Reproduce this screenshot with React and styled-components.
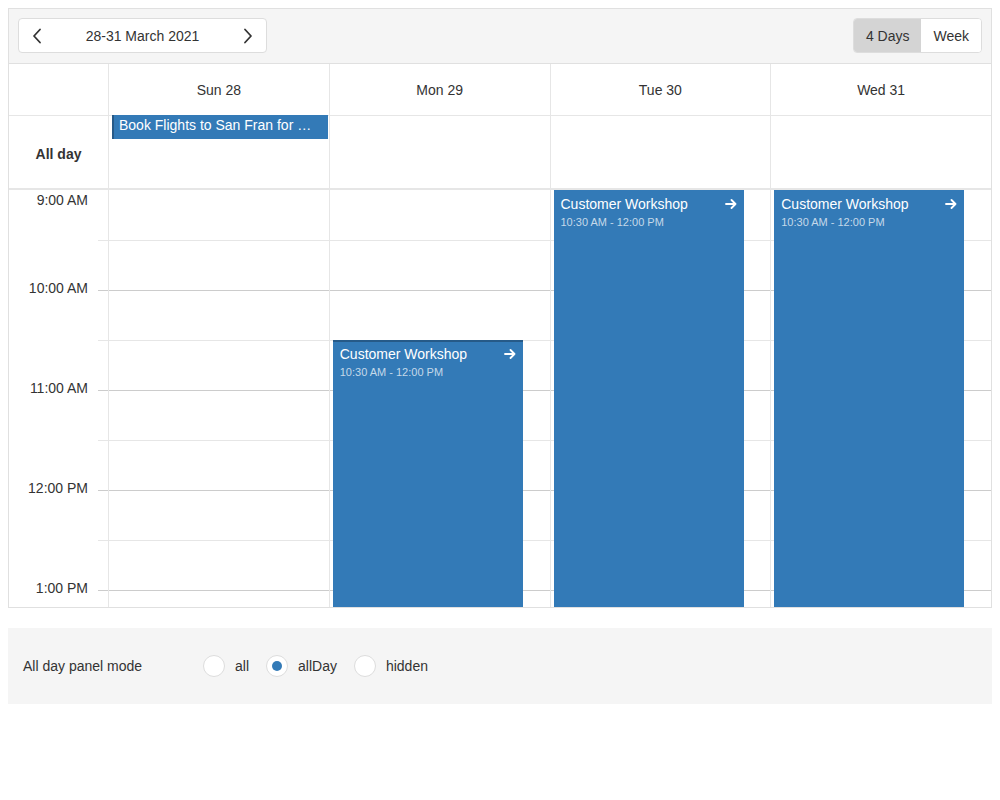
import styled, { createGlobalStyle } from "styled-components";

const GlobalStyle = createGlobalStyle`
    body {
        margin: 0;
        background: #fff;
        font-family: "Liberation Sans", Arial, sans-serif;
        color: #333;
    }
`;

const Page = styled.div`
    padding: 8px;
    width: 984px;
`;

const Scheduler = styled.div`
    border: 1px solid #e0e0e0;
    height: 598px;
    display: flex;
    flex-direction: column;
    overflow: hidden;
`;

const Toolbar = styled.div`
    height: 55px;
    flex-shrink: 0;
    box-sizing: border-box;
    padding: 9px;
    background: #f5f5f5;
    border-bottom: 1px solid #e0e0e0;
    display: flex;
    align-items: flex-start;
    justify-content: space-between;
`;

const Navigator = styled.div`
    width: 249px;
    height: 35px;
    box-sizing: border-box;
    border: 1px solid #ddd;
    border-radius: 4px;
    background: #fff;
    display: flex;
    align-items: center;
`;

const NavButton = styled.div`
    width: 36px;
    height: 100%;
    display: flex;
    align-items: center;
    justify-content: center;
`;

const Caption = styled.div`
    flex: 1;
    text-align: center;
    font-size: 14px;
`;

const Switcher = styled.div`
    height: 35px;
    box-sizing: border-box;
    border: 1px solid #ddd;
    border-radius: 4px;
    background: #fff;
    display: flex;
    overflow: hidden;
`;

const ViewButton = styled.div`
    padding: 0 12px;
    display: flex;
    align-items: center;
    font-size: 14px;
    background: ${(p) => (p.$active ? "#d4d4d4" : "#fff")};
`;

const Row = styled.div`
    display: grid;
    grid-template-columns: 99px repeat(4, minmax(0, 1fr));
    flex-shrink: 0;
`;

const HeaderRow = styled(Row)`
    height: 52px;
    box-sizing: border-box;
    border-bottom: 1px solid #e6e6e6;
`;

const DayName = styled.div`
    border-left: 1px solid #e6e6e6;
    display: flex;
    align-items: center;
    justify-content: center;
    font-size: 14px;
`;

const AllDayRow = styled(Row)`
    height: 74px;
    box-sizing: border-box;
    border-bottom: 2px solid #e6e6e6;
`;

const AllDayLabel = styled.div`
    display: flex;
    align-items: center;
    justify-content: center;
    font-size: 14px;
    font-weight: bold;
    padding-top: 3px;
`;

const AllDayCell = styled.div`
    border-left: 1px solid #e6e6e6;
    padding: 0 1px 0 3px;
    min-width: 0;
`;

const AllDayEvent = styled.div`
    margin-top: -1px;
    height: 24px;
    box-sizing: border-box;
    background: #337ab7;
    border-left: 2px solid #265a88;
    color: #fff;
    font-size: 14px;
    line-height: 16px;
    padding: 2px 5px 0;
    white-space: nowrap;
`;

const Body = styled(Row)`
    flex: 1;
    overflow: hidden;
`;

const TimeColumn = styled.div`
    display: flex;
    flex-direction: column;
`;

const lineColor = (i) => (i === 0 ? "transparent" : i % 2 === 0 ? "#cccccc" : "#e6e6e6");

const TimeCell = styled.div`
    height: 50px;
    flex-shrink: 0;
    box-sizing: border-box;
    padding-right: 20px;
    text-align: right;
    background: linear-gradient(${(p) => lineColor(p.$index)}, ${(p) => lineColor(p.$index)}) right top / 10px 1px no-repeat;
`;

const TimeLabel = styled.div`
    font-size: 14px;
    line-height: 16px;
    margin-top: ${(p) => (p.$first ? "2px" : "-10px")};
`;

const DayColumn = styled.div`
    position: relative;
    border-left: 1px solid #e6e6e6;
    display: flex;
    flex-direction: column;
`;

const GridCell = styled.div`
    height: 50px;
    flex-shrink: 0;
    box-sizing: border-box;
    border-top: 1px solid ${(p) => lineColor(p.$index)};
`;

const Appointment = styled.div`
    position: absolute;
    left: 3px;
    width: 190px;
    bottom: 0;
    box-sizing: border-box;
    background: #337ab7;
    border-top: 2px solid ${(p) => (p.$marked ? "#265a88" : "#337ab7")};
    padding: 4px 7px 0;
    color: #fff;
`;

const ApptHead = styled.div`
    display: flex;
    align-items: center;
    justify-content: space-between;
`;

const ApptTitle = styled.div`
    font-size: 14px;
    line-height: 16px;
`;

const ApptTime = styled.div`
    margin-top: 3px;
    font-size: 11px;
    line-height: 14px;
    color: rgba(255, 255, 255, 0.72);
`;

const Options = styled.div`
    margin-top: 20px;
    height: 76px;
    background: #f5f5f5;
    padding-left: 15px;
    display: flex;
    align-items: center;
    font-size: 14px;
`;

const OptionLabel = styled.div`
    width: 180px;
`;

const RadioGroup = styled.div`
    display: flex;
    align-items: center;
    gap: 17px;
`;

const RadioItem = styled.div`
    display: flex;
    align-items: center;
    gap: 10px;
`;

const RadioCircle = styled.div`
    width: 22px;
    height: 22px;
    box-sizing: border-box;
    border-radius: 50%;
    border: 1px solid #ddd;
    background: #fff;
    display: flex;
    align-items: center;
    justify-content: center;
    &::after {
        content: "";
        width: 10px;
        height: 10px;
        border-radius: 50%;
        background: ${(p) => (p.$checked ? "#337ab7" : "transparent")};
    }
`;

const Chevron = ({ dir }) => (
    <svg width="10" height="16" viewBox="0 0 10 16" fill="none">
        <path
            d={dir === "left" ? "M8 1.5 L2 8 L8 14.5" : "M2 1.5 L8 8 L2 14.5"}
            stroke="#333"
            strokeWidth="1.8"
            strokeLinecap="round"
            strokeLinejoin="round"
        />
    </svg>
);

const Arrow = () => (
    <svg width="12" height="10" viewBox="0 0 12 10" fill="none">
        <path
            d="M1 5 H10.5 M6.5 1 L10.5 5 L6.5 9"
            stroke="#fff"
            strokeWidth="1.8"
            strokeLinecap="round"
            strokeLinejoin="round"
        />
    </svg>
);

const days = ["Sun 28", "Mon 29", "Tue 30", "Wed 31"];
const hours = ["9:00 AM", "10:00 AM", "11:00 AM", "12:00 PM", "1:00 PM"];
const rows = Array.from({ length: 9 }, (_, i) => i);

// offset in minutes from 9:00 AM
const appointments = [
    { day: 1, start: 90, marked: true },
    { day: 2, start: 0 },
    { day: 3, start: 0 },
];

function App() {
    return (
        <Page>
            <GlobalStyle />
            <Scheduler>
                <Toolbar>
                    <Navigator>
                        <NavButton>
                            <Chevron dir="left" />
                        </NavButton>
                        <Caption>28-31 March 2021</Caption>
                        <NavButton>
                            <Chevron dir="right" />
                        </NavButton>
                    </Navigator>
                    <Switcher>
                        <ViewButton $active>4 Days</ViewButton>
                        <ViewButton>Week</ViewButton>
                    </Switcher>
                </Toolbar>
                <HeaderRow>
                    <div />
                    {days.map((d) => (
                        <DayName key={d}>{d}</DayName>
                    ))}
                </HeaderRow>
                <AllDayRow>
                    <AllDayLabel>All day</AllDayLabel>
                    {days.map((d, i) => (
                        <AllDayCell key={d}>
                            {i === 0 && <AllDayEvent>Book Flights to San Fran for …</AllDayEvent>}
                        </AllDayCell>
                    ))}
                </AllDayRow>
                <Body>
                    <TimeColumn>
                        {rows.map((i) => (
                            <TimeCell key={i} $index={i}>
                                {i % 2 === 0 && hours[i / 2] && (
                                    <TimeLabel $first={i === 0}>{hours[i / 2]}</TimeLabel>
                                )}
                            </TimeCell>
                        ))}
                    </TimeColumn>
                    {days.map((d, di) => (
                        <DayColumn key={d}>
                            {rows.map((i) => (
                                <GridCell key={i} $index={i} />
                            ))}
                            {appointments
                                .filter((a) => a.day === di)
                                .map((a) => (
                                    <Appointment
                                        key={a.day}
                                        $marked={a.marked}
                                        style={{ top: (a.start / 30) * 50 }}
                                    >
                                        <ApptHead>
                                            <ApptTitle>Customer Workshop</ApptTitle>
                                            <Arrow />
                                        </ApptHead>
                                        <ApptTime>10:30 AM - 12:00 PM</ApptTime>
                                    </Appointment>
                                ))}
                        </DayColumn>
                    ))}
                </Body>
            </Scheduler>
            <Options>
                <OptionLabel>All day panel mode</OptionLabel>
                <RadioGroup>
                    {["all", "allDay", "hidden"].map((m) => (
                        <RadioItem key={m}>
                            <RadioCircle $checked={m === "allDay"} />
                            {m}
                        </RadioItem>
                    ))}
                </RadioGroup>
            </Options>
        </Page>
    );
}

export default App;
